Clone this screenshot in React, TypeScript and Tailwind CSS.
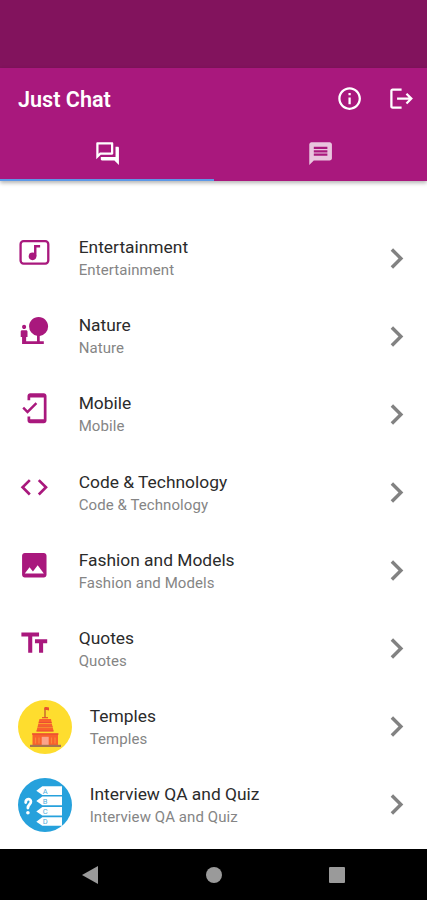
import { useState } from "react";
import type { ReactNode } from "react";
import {
    MdChevronRight,
    MdCode,
    MdImage,
    MdLogout,
    MdMessage,
    MdMobileFriendly,
    MdNaturePeople,
    MdOutlineInfo,
    MdOutlineQuestionAnswer,
    MdTextFields,
} from "react-icons/md";

interface Category {
    name: string;
    icon: ReactNode;
    round?: boolean;
}

function MusicIcon() {
    return (
        <svg viewBox="0 0 24 24" className="size-[1em]" fill="none" stroke="currentColor">
            <rect x="1.900" y="3.800" width="20.400" height="16.500" rx="2.200" strokeWidth="1.700" />
            <circle cx="10.700" cy="15" r="2.800" fill="currentColor" stroke="none" />
            <path d="M12.700 15V7.500H16.300" strokeWidth="1.800" />
        </svg>
    );
}

function TempleIcon() {
    return (
        <svg viewBox="0 0 54 54" className="size-[54px]">
            <circle cx="27" cy="27" r="27" fill="#fedd2e" />
            <path d="M27 8v10" stroke="#b9502f" strokeWidth="1.200" />
            <path d="M26.500 7h2l2.500.5v3l-2-.5h-2.500z" fill="#e8502e" />
            <path d="M24 17.700h6" stroke="#e8502e" strokeWidth="1.200" />
            <path d="M21.500 19h11.500l.7 3.500H20.500z" fill="#f9622c" />
            <path d="M20.300 23.500h13.500l.7 3H19.700z" fill="#f9622c" />
            <path d="M19.300 27.500h15.500l.8 3.700H18.500z" fill="#f9622c" />
            <path d="M20.700 22.500h13M19.700 26.700h15M18.500 31h17" stroke="#e84d35" strokeWidth="1.100" />
            <rect x="14.500" y="33.500" width="25.500" height="11.500" fill="#f9622c" />
            <path d="M14 34h26.500" stroke="#e84d35" strokeWidth="1.300" />
            <rect x="23.700" y="36.800" width="7" height="8.200" fill="#fba48a" />
            <path d="M17.500 37.500v6M21 37.500v6M33.500 37.500v6M37 37.500v6" stroke="#f78a3a" strokeWidth="1.200" />
            <rect x="12" y="44.800" width="31" height="2.200" fill="#a6764f" />
        </svg>
    );
}

function QuizIcon() {
    const answers = [
        { letter: "A", top: 8.300 },
        { letter: "B", top: 18.600 },
        { letter: "C", top: 28.900 },
        { letter: "D", top: 39.200 },
    ];

    return (
        <svg viewBox="0 0 54 54" className="size-[54px]">
            <circle cx="27" cy="27" r="27" fill="#26a1dc" />
            <path
                d="M7.700 24.500c0-4 5.200-4.500 5.200-.8 0 2.500-3 2.600-3 6.300"
                fill="none"
                stroke="#fff"
                strokeWidth="2.800"
                strokeLinecap="round"
            />
            <circle cx="9.900" cy="34.800" r="1.800" fill="#fff" />
            {answers.map(({ letter, top }) => (
                <g key={letter} transform={`translate(18.300 ${top})`}>
                    <path d="M0 4.500L6 0h19.700v8.600H6z" fill="#fff" />
                    <text x="6.500" y="7.300" fontSize="7.500" fill="#4aaede" fontFamily="Roboto, sans-serif">
                        {letter}
                    </text>
                </g>
            ))}
        </svg>
    );
}

const categories: Category[] = [
    { name: "Entertainment", icon: <MusicIcon /> },
    { name: "Nature", icon: <MdNaturePeople /> },
    { name: "Mobile", icon: <MdMobileFriendly /> },
    { name: "Code & Technology", icon: <MdCode /> },
    { name: "Fashion and Models", icon: <MdImage /> },
    { name: "Quotes", icon: <MdTextFields /> },
    { name: "Temples", icon: <TempleIcon />, round: true },
    { name: "Interview QA and Quiz", icon: <QuizIcon />, round: true },
];

function CategoryRow({ name, icon, round }: Category) {
    return (
        <li className="flex h-[78.150px] cursor-pointer pl-[17.700px] pr-[10.200px]">
            {round ? (
                <div className="mr-[18px] pt-[12.300px]">{icon}</div>
            ) : (
                <div className="mr-[28.400px] pt-[17.200px] text-[32.600px] text-[#a9187d]">{icon}</div>
            )}
            <div className="flex-1 pt-[17.200px]">
                <p className="text-[17.400px] leading-[23px] text-[#2b2b2b]">{name}</p>
                <p className="text-[15px] leading-[22px] tracking-[0.080px] text-[#858585]">{name}</p>
            </div>
            <MdChevronRight className="mt-[18.500px] size-[41px] text-[#828282]" />
        </li>
    );
}

export default function App() {
    const [tab, setTab] = useState(0);

    return (
        <div className="flex h-[900px] w-[427px] flex-col overflow-hidden bg-white font-[Roboto,sans-serif]">
            <div className="h-[68px] shrink-0 bg-[#82135d]" />

            <header className="h-[113px] shrink-0 bg-[#a9187d] text-white shadow-[0_2px_4px_rgba(0,0,0,0.3)]">
                <div className="flex h-[61px] items-center pl-[18px] pr-3">
                    <h1 className="flex-1 pt-[3px] text-[21.600px] font-semibold">Just Chat</h1>
                    <button className="mr-[25px]">
                        <MdOutlineInfo className="size-[27.200px]" />
                    </button>
                    <button>
                        <MdLogout className="size-[27.200px]" />
                    </button>
                </div>
                <nav className="grid h-[52px] grid-cols-2">
                    <button
                        onClick={() => setTab(0)}
                        className={`flex justify-center border-b-[2.500px] pt-[11px] pl-px ${tab === 0 ? "border-[#5d98e6]" : "border-transparent text-white/75"}`}
                    >
                        <MdOutlineQuestionAnswer className="size-[27.200px]" />
                    </button>
                    <button
                        onClick={() => setTab(1)}
                        className={`flex justify-center border-b-[2.500px] pt-[11px] pl-px ${tab === 1 ? "border-[#5d98e6]" : "border-transparent text-white/75"}`}
                    >
                        <MdMessage className="size-[27.200px]" />
                    </button>
                </nav>
            </header>

            <ul className="flex-1 pt-[38px]">
                {categories.map(category => (
                    <CategoryRow key={category.name} {...category} />
                ))}
            </ul>

            <footer className="flex h-[51px] shrink-0 items-center bg-black pl-[81.500px] text-[#9a9a9a]">
                <svg viewBox="0 0 16 18" className="h-[18px] w-4 fill-current">
                    <path d="M0 9L16 0v18z" />
                </svg>
                <div className="ml-[108.500px] size-4 rounded-full bg-current" />
                <div className="ml-[106.500px] size-4 rounded-[1px] bg-current" />
            </footer>
        </div>
    );
}
